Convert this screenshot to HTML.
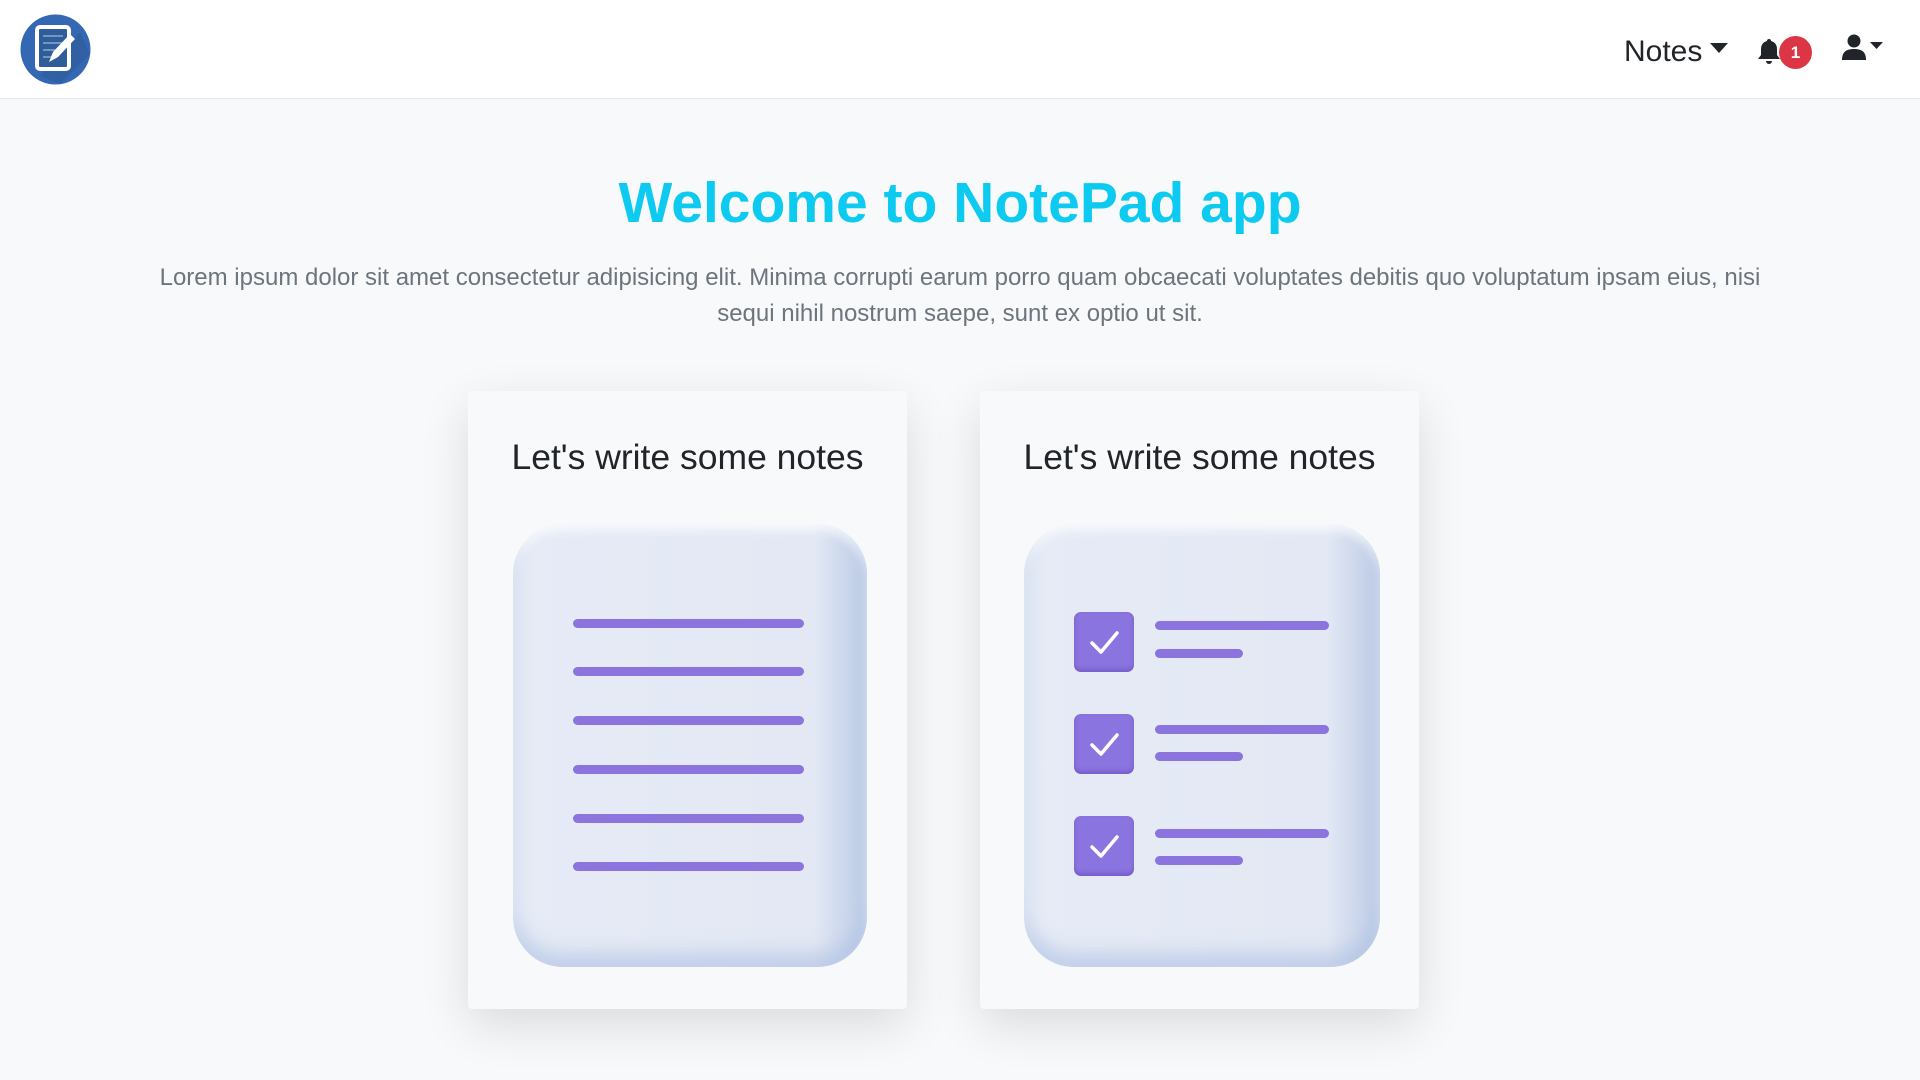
<!DOCTYPE html>
<html><head><meta charset="utf-8"><style>
*{margin:0;padding:0;box-sizing:border-box}
body{width:1920px;height:1080px;background:#f8f9fa;font-family:"Liberation Sans",sans-serif;position:relative;overflow:hidden}
.nav{position:absolute;left:0;top:0;width:1920px;height:99px;background:#fff;border-bottom:1px solid #e6e6e6}
.abs{position:absolute}
h1{position:absolute;left:0;width:1920px;top:167px;text-align:center;color:#0dcaf0;font-weight:bold;font-size:57px;line-height:72px}
p.lead{position:absolute;left:0;width:1920px;top:260px;text-align:center;color:#6c757d;font-size:24px;line-height:36px}
.card{position:absolute;top:391px;width:439px;height:618px;background:#f8f9fa;box-shadow:0 16px 48px rgba(0,0,0,.12);border-radius:4px}
.ct{position:absolute;left:0;width:100%;top:46px;text-align:center;font-size:35.5px;color:#212529;font-weight:normal}
.paper{position:absolute;top:133px;width:354px;height:443px;border-radius:50px;background:linear-gradient(90deg,#e6ebf6 0%,#e3e8f4 85%,#bccbe6 100%);box-shadow:inset 0 -14px 18px rgba(170,190,225,.6),inset 0 6px 10px rgba(255,255,255,.8)}
.ln{position:absolute;height:9px;border-radius:5px;background:#8b74dd}
.cb{position:absolute;width:60px;height:60px;border-radius:7px;background:#8a74df;box-shadow:inset 0 -3px 4px rgba(90,60,180,.4)}
</style></head><body>
<div class="nav">
 <svg class="abs" style="left:20px;top:14px" width="71" height="71" viewBox="0 0 71 71">
  <circle cx="35.5" cy="35.5" r="35" fill="#3468b3"/>
  <path d="M20 62 L60 18 L70 40 L40 70Z" fill="#2e5a99" opacity=".6"/>
  <rect x="17" y="13" width="32" height="42" rx="3" fill="#2f5d9a" stroke="#fff" stroke-width="4"/>
  <path d="M23 22h20M23 29h20M23 36h14M23 43h10" stroke="#8aa8d4" stroke-width="1.5"/>
  <path d="M29 48 L33 38 L50 20 L55 25 L38 43Z" fill="#fff"/>
 </svg>
 <div class="abs" style="left:1624px;top:35px;font-size:30px;color:#212529">Notes</div>
 <svg class="abs" style="left:1710px;top:43px" width="18" height="10"><path d="M0 0h18L9 10z" fill="#212529"/></svg>
 <svg class="abs" style="left:1757px;top:38px" width="24" height="26" viewBox="0 0 24 26"><path d="M12 1c1.5 0 2 1 2 2 4 1 6 4 6 8v6l3 4H1l3-4v-6c0-4 2-7 6-8 0-1 .5-2 2-2z" fill="#212529"/><path d="M9 23h6a3 3 0 0 1-6 0z" fill="#212529"/></svg>
 <div class="abs" style="left:1779px;top:36px;width:33px;height:33px;border-radius:50%;background:#dc3545;color:#fff;font-weight:bold;font-size:17px;text-align:center;line-height:33px">1</div>
 <svg class="abs" style="left:1842px;top:34px" width="24" height="26" viewBox="0 0 24 26"><circle cx="12" cy="7" r="6.5" fill="#212529"/><path d="M0 26c0-8 4-11 12-11s12 3 12 11z" fill="#212529"/></svg>
 <svg class="abs" style="left:1870px;top:42px" width="13" height="7"><path d="M0 0h13L6.5 7z" fill="#212529"/></svg>
</div>
<h1>Welcome to NotePad app</h1>
<p class="lead">Lorem ipsum dolor sit amet consectetur adipisicing elit. Minima corrupti earum porro quam obcaecati voluptates debitis quo voluptatum ipsam eius, nisi<br>sequi nihil nostrum saepe, sunt ex optio ut sit.</p>
<div class="card" style="left:468px">
 <div class="ct">Let's write some notes</div>
 <div class="paper" style="left:45px">
  <div class="ln" style="left:60px;width:231px;top:95px"></div>
  <div class="ln" style="left:60px;width:231px;top:143px"></div>
  <div class="ln" style="left:60px;width:231px;top:192px"></div>
  <div class="ln" style="left:60px;width:231px;top:241px"></div>
  <div class="ln" style="left:60px;width:231px;top:290px"></div>
  <div class="ln" style="left:60px;width:231px;top:338px"></div>
 </div>
</div>
<div class="card" style="left:980px">
 <div class="ct">Let's write some notes</div>
 <div class="paper" style="left:44px;width:356px">
  <div class="cb" style="left:50px;top:88px"><svg width="60" height="60"><path d="M18 31l9 9 16-19" stroke="#fff" stroke-width="3.5" fill="none" stroke-linecap="round" stroke-linejoin="round"/></svg></div>
  <div class="ln" style="left:131px;width:174px;top:97px"></div>
  <div class="ln" style="left:131px;width:88px;top:125px"></div>
  <div class="cb" style="left:50px;top:190px"><svg width="60" height="60"><path d="M18 31l9 9 16-19" stroke="#fff" stroke-width="3.5" fill="none" stroke-linecap="round" stroke-linejoin="round"/></svg></div>
  <div class="ln" style="left:131px;width:174px;top:201px"></div>
  <div class="ln" style="left:131px;width:88px;top:228px"></div>
  <div class="cb" style="left:50px;top:292px"><svg width="60" height="60"><path d="M18 31l9 9 16-19" stroke="#fff" stroke-width="3.5" fill="none" stroke-linecap="round" stroke-linejoin="round"/></svg></div>
  <div class="ln" style="left:131px;width:174px;top:305px"></div>
  <div class="ln" style="left:131px;width:88px;top:332px"></div>
 </div>
</div>
</body></html>
